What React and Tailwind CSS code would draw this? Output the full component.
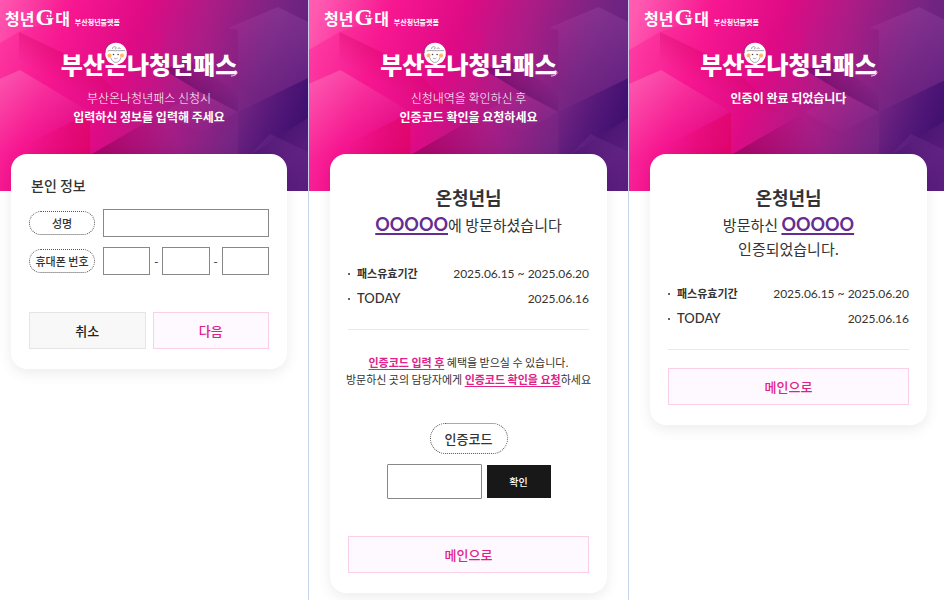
import clsx from "clsx";

const BUTTON_STYLES = {
  pink: "border-[#fbcfe6] bg-[#fef8ff] text-[#e0218a]",
  gray: "border-[#e5e5e5] bg-[#f8f8f8] text-[#222222]",
};

// each facet fades from one point to another, in the 320x191 hero space
const FACETS = [
  { points: "0,0 130,0 31,32 0,50", from: [0, 0], to: [70, 24], color: "#ffffff", opacity: 0.16 },
  { points: "31,32 102,66 150,112 102,112 31,72", from: [72, 46], to: [56, 76], color: "#d0005f", opacity: 0.4 },
  { points: "0,84 32,70 102,112 60,136 0,165", from: [20, 72], to: [50, 140], color: "#ffffff", opacity: 0.17 },
  { points: "0,165 102,112 102,155 40,191 0,191", from: [100, 155], to: [40, 140], color: "#e0005c", opacity: 0.6 },
  { points: "92,60 176,28 176,112 102,155 102,112", from: [176, 28], to: [130, 90], color: "#f0008a", opacity: 0.2 },
  { points: "176,28 240,0 250,28 210,92 176,70", from: [176, 60], to: [230, 20], color: "#c2188c", opacity: 0.25 },
  { points: "240,28 290,7 320,22 320,78 250,112 250,30", from: [290, 10], to: [262, 90], color: "#c06cc4", opacity: 0.17 },
  { points: "176,70 212,92 250,112 250,92 200,60", from: [198, 84], to: [225, 62], color: "#4a0a5e", opacity: 0.5 },
  { points: "176,112 212,92 250,112 212,133", from: [212, 92], to: [212, 140], color: "#c655b4", opacity: 0.16 },
  { points: "102,155 176,112 212,133 250,155 250,191 60,191", from: [118, 156], to: [180, 125], color: "#7a0050", opacity: 0.5 },
  { points: "250,112 320,78 320,118 262,155 250,155", from: [320, 118], to: [250, 92], color: "#2c0668", opacity: 0.6 },
  { points: "262,155 320,118 320,191 262,191", from: [275, 145], to: [300, 165], color: "#2a0560", opacity: 0.5 },
  { points: "282,134 320,152 320,191 290,191 262,155", from: [300, 135], to: [300, 200], color: "#9a4aa6", opacity: 0.18 },
];

function HeroBackground({ id, align }) {
  return (
    <svg
      className="absolute inset-x-0 top-0 h-[191px] w-full"
      viewBox="0 0 320 191"
      preserveAspectRatio={`${align} slice`}
      aria-hidden="true"
    >
      <defs>
        <linearGradient id={`${id}-base`} gradientUnits="userSpaceOnUse" x1="0" y1="30" x2="310" y2="150">
          <stop offset="0" stopColor="#ff3fa4" />
          <stop offset="0.22" stopColor="#f61690" />
          <stop offset="0.42" stopColor="#de0b85" />
          <stop offset="0.6" stopColor="#ab1c86" />
          <stop offset="0.8" stopColor="#762583" />
          <stop offset="1" stopColor="#571c7c" />
        </linearGradient>
        {FACETS.map((facet, i) => (
          <linearGradient
            key={facet.points}
            id={`${id}-facet-${i}`}
            gradientUnits="userSpaceOnUse"
            x1={facet.from[0]}
            y1={facet.from[1]}
            x2={facet.to[0]}
            y2={facet.to[1]}
          >
            <stop offset="0" stopColor={facet.color} stopOpacity={facet.opacity} />
            <stop offset="1" stopColor={facet.color} stopOpacity="0" />
          </linearGradient>
        ))}
      </defs>
      <rect width="320" height="191" fill={`url(#${id}-base)`} />
      {FACETS.map((facet, i) => (
        <polygon key={facet.points} points={facet.points} fill={`url(#${id}-facet-${i})`} />
      ))}
    </svg>
  );
}

function Brand() {
  return (
    <a href="#" className="-ml-[6px] flex h-8 items-end pb-[3px] font-bold">
      <span className="flex items-baseline gap-px text-[16px] leading-[22px]">
        청년
        <span className="relative font-['Liberation_Serif',serif] text-[24px] leading-[22px]">
          G
          <svg className="absolute top-[7px] right-0 h-2 w-2" viewBox="0 0 8 8" aria-hidden="true">
            <circle cx="1.5" cy="3" r="0.9" fill="#fff" />
            <circle cx="4.5" cy="3" r="0.9" fill="#fff" />
          </svg>
        </span>
        대
      </span>
      <span className="ml-[5px] text-[7px] leading-[14px]">부산청년플랫폼</span>
    </a>
  );
}

function Face() {
  return (
    <svg
      className="absolute -top-1 left-1/2 h-[23px] w-[23px] -translate-x-1/2"
      viewBox="0 0 23 23"
      fill="none"
      aria-hidden="true"
    >
      <circle cx="11.5" cy="11.5" r="10.8" fill="#fff" />
      <path d="M1 11C0 6 3 2 7 1" stroke="#7a3a66" strokeWidth="0.6" />
      <path d="M8 7C8 5.2 9.5 4.2 11 4.8C12 5.4 11.8 7 10.5 7M13.4 6.8C13.8 5.6 15.5 5.4 16 7" stroke="#666" strokeWidth="0.6" />
      <path d="M3 9C7 7.8 10 9 13 8.7C16 8.4 18 9 20.5 8.3" stroke="#666" strokeWidth="0.6" />
      <circle cx="5" cy="13.5" r="2" fill="#ffb866" />
      <circle cx="17.5" cy="13.5" r="2" fill="#ffb866" />
      <path d="M6.2 15.5C7.2 19 9.3 20.4 11.3 20.4C13.8 20.4 15.8 18.6 16.3 15.5" stroke="#888" strokeWidth="0.7" />
      <circle cx="9" cy="12.5" r="0.8" fill="#444" />
      <circle cx="13.6" cy="12.5" r="0.8" fill="#444" />
      <path d="M9.5 16C10.3 17 12.2 17 13 16" stroke="#777" strokeWidth="0.6" />
    </svg>
  );
}

function PassTitle() {
  return (
    <h1 className="mt-[14px] flex h-9 items-center justify-center text-[24px] leading-9 font-black">
      부산
      <span className="relative">
        온
        <Face />
      </span>
      나청년패
      <span className="relative">
        스
        <svg className="absolute -right-px bottom-[5px] h-2 w-2" viewBox="0 0 8 8" fill="none" aria-hidden="true">
          <path d="M1 7C4 7 7 5.5 7 3.5C7 2 5.5 1.5 4.5 2" stroke="#fff" strokeWidth="0.8" />
        </svg>
      </span>
    </h1>
  );
}

function Panel({ id, align = "xMidYMin", className, intro, message, children }) {
  return (
    <section className={clsx("relative min-h-screen overflow-hidden bg-white", className)}>
      <HeroBackground id={id} align={align} />
      <header className="relative h-[154px] text-white">
        <Brand />
        <PassTitle />
        <p className="mt-[6px] text-center text-[12px] leading-[19px]">
          {intro && <span className="block font-light">{intro}</span>}
          <strong className="block font-bold">{message}</strong>
        </p>
      </header>
      <div className="relative rounded-[16px] bg-white px-[18px] pb-5 shadow-[0_4px_14px_rgba(0,0,0,0.08)]">
        {children}
      </div>
    </section>
  );
}

function ActionButton({ variant = "pink", children }) {
  return (
    <button type="button" className={clsx("h-[37px] w-full border text-[13px] font-medium", BUTTON_STYLES[variant])}>
      {children}
    </button>
  );
}

function TextInput({ className, ...props }) {
  return <input type="text" className={clsx("min-w-0 border border-[#888888] bg-white px-2 text-[12px]", className)} {...props} />;
}

function PillLabel({ htmlFor, className, children }) {
  return (
    <label
      htmlFor={htmlFor}
      className={clsx("flex items-center justify-center rounded-full border border-dotted border-[#555555] font-medium whitespace-nowrap", className)}
    >
      {children}
    </label>
  );
}

function Place() {
  return (
    <span className="font-['Lato',sans-serif] text-[18px] font-bold text-[#662d91] underline decoration-2 underline-offset-2">
      OOOOO
    </span>
  );
}

function PassInfo({ className }) {
  return (
    <dl className={clsx("border-b border-[#e9e9e9] pb-[18px] leading-[25px]", className)}>
      <div className="flex justify-between">
        <dt className="flex items-center gap-[7px] text-[11px] font-bold">
          <span className="h-[2px] w-[2px] rounded-full bg-[#333333]" />
          패스유효기간
        </dt>
        <dd className="font-['Lato',sans-serif] text-[12px]">2025.06.15 ~ 2025.06.20</dd>
      </div>
      <div className="flex justify-between">
        <dt className="flex items-center gap-[7px] font-['Lato',sans-serif] text-[13px] font-medium">
          <span className="h-[2px] w-[2px] rounded-full bg-[#333333]" />
          TODAY
        </dt>
        <dd className="font-['Lato',sans-serif] text-[12px]">2025.06.16</dd>
      </div>
    </dl>
  );
}

function Highlight({ children }) {
  return (
    <strong className="font-bold text-[#e0218a] underline underline-offset-2 [text-decoration-skip-ink:none]">
      {children}
    </strong>
  );
}

function ApplicantPanel() {
  return (
    <Panel
      id="apply"
      align="xMaxYMin"
      className="pr-[21px] pl-[11px]"
      intro="부산온나청년패스 신청시"
      message="입력하신 정보를 입력해 주세요"
    >
      <form className="pt-[21px]">
        <h2 className="pl-[2px] text-[14px] leading-5 font-medium">본인 정보</h2>
        <div className="mt-[14px] flex items-center gap-2">
          <PillLabel htmlFor="name" className="h-6 w-[66px] shrink-0 text-[11px]">
            성명
          </PillLabel>
          <TextInput id="name" className="h-7 flex-1" />
        </div>
        <div className="mt-[10px] flex items-center gap-2">
          <PillLabel htmlFor="phone1" className="h-6 w-[66px] shrink-0 text-[11px]">
            휴대폰 번호
          </PillLabel>
          <div className="flex min-w-0 flex-1 items-center text-[12px]">
            <TextInput id="phone1" className="h-7 flex-1" />
            <span className="w-3 text-center">-</span>
            <TextInput aria-label="휴대폰 번호 가운데 자리" className="h-7 flex-1" />
            <span className="w-3 text-center">-</span>
            <TextInput aria-label="휴대폰 번호 끝자리" className="h-7 flex-1" />
          </div>
        </div>
        <div className="mt-[37px] grid grid-cols-2 gap-[7px]">
          <ActionButton variant="gray">취소</ActionButton>
          <ActionButton>다음</ActionButton>
        </div>
      </form>
    </Panel>
  );
}

function CodePanel() {
  return (
    <Panel
      id="code"
      className="border-l border-[#c8d4ea] px-[21px]"
      intro="신청내역을 확인하신 후"
      message="인증코드 확인을 요청하세요"
    >
      <div className="pt-7 text-center">
        <h2 className="text-[18px] leading-[30px] font-bold">온청년님</h2>
        <p className="text-[15px] leading-6">
          <Place />에 방문하셨습니다
        </p>
      </div>
      <PassInfo className="mt-6" />
      <p className="-mx-3 mt-6 text-center text-[11px] leading-[17px] whitespace-nowrap">
        <Highlight>인증코드 입력 후</Highlight> 혜택을 받으실 수 있습니다.
        <br />
        방문하신 곳의 담당자에게 <Highlight>인증코드 확인을 요청</Highlight>하세요
      </p>
      <form className="mt-[35px] mb-[37px] flex flex-col items-center gap-[10px]">
        <PillLabel htmlFor="code" className="h-[31px] w-[78px] text-[13px]">
          인증코드
        </PillLabel>
        <div className="flex items-center gap-[5px]">
          <TextInput id="code" className="h-[35px] w-[95px] rounded-[1px]" />
          <button type="button" className="h-[33px] w-16 bg-[#181818] text-[10px] font-medium text-white">
            확인
          </button>
        </div>
      </form>
      <ActionButton>메인으로</ActionButton>
    </Panel>
  );
}

function CompletePanel() {
  return (
    <Panel
      id="complete"
      align="xMinYMin"
      className="border-l border-[#c8d4ea] pr-[17px] pl-[21px]"
      message="인증이 완료 되었습니다"
    >
      <div className="pt-7 text-center">
        <h2 className="text-[18px] leading-[30px] font-bold">온청년님</h2>
        <p className="text-[15px] leading-6">
          방문하신 <Place />
          <br />
          인증되었습니다.
        </p>
      </div>
      <PassInfo className="mt-5 mb-[18px]" />
      <ActionButton>메인으로</ActionButton>
    </Panel>
  );
}

function App() {
  return (
    <main className="grid min-h-screen grid-cols-[308fr_320fr_316fr] bg-white font-['Noto_Sans_CJK_KR',sans-serif] text-[#333333]">
      <ApplicantPanel />
      <CodePanel />
      <CompletePanel />
    </main>
  );
}

export default App;
